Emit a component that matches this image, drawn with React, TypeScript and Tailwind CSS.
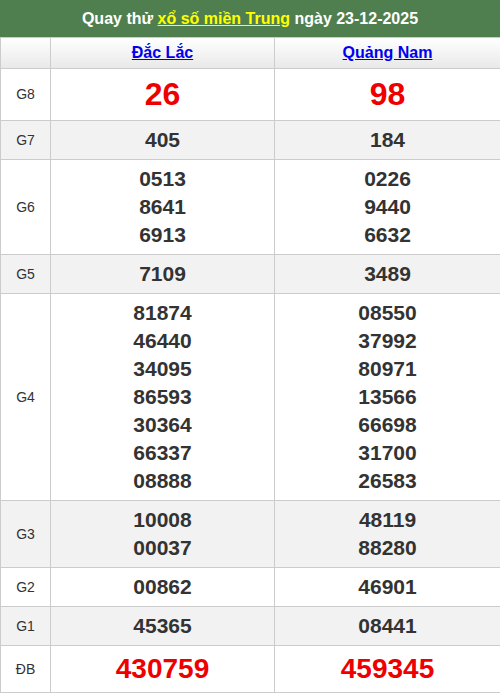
import React from "react";

const rows = [
  { label: "G8", a: ["26"], b: ["98"], big: "g8" },
  { label: "G7", a: ["405"], b: ["184"] },
  { label: "G6", a: ["0513", "8641", "6913"], b: ["0226", "9440", "6632"] },
  { label: "G5", a: ["7109"], b: ["3489"] },
  {
    label: "G4",
    a: ["81874", "46440", "34095", "86593", "30364", "66337", "08888"],
    b: ["08550", "37992", "80971", "13566", "66698", "31700", "26583"],
  },
  { label: "G3", a: ["10008", "00037"], b: ["48119", "88280"] },
  { label: "G2", a: ["00862"], b: ["46901"] },
  { label: "G1", a: ["45365"], b: ["08441"] },
  { label: "ĐB", a: ["430759"], b: ["459345"], big: "db" },
];

function Cell({ nums, big }: { nums: string[]; big?: string }) {
  let cls = "text-[21px] leading-[28px] text-[#333]";
  if (big === "g8") cls = "text-[32px] leading-[41px] text-[#e00]";
  if (big === "db") cls = "text-[28px] leading-[36px] text-[#e00]";
  return (
    <td className="border border-[#ccc] py-[5px] text-center font-bold">
      {nums.map((n) => (
        <div key={n} className={cls}>
          {n}
        </div>
      ))}
    </td>
  );
}

export default function App() {
  return (
    <div className="w-[500px] bg-white" style={{ fontFamily: "'Liberation Sans', Arial, sans-serif" }}>
      <div className="h-[37px] bg-[#4f7f4f] flex items-center justify-center text-white font-bold text-[16px]">
        Quay thử&nbsp;
        <a href="#" className="text-[#ffff00] underline">
          xổ số miền Trung
        </a>
        &nbsp;ngày 23-12-2025
      </div>
      <table className="w-[500px] border-collapse table-fixed">
        <colgroup>
          <col className="w-[50px]" />
          <col className="w-[224px]" />
          <col className="w-[226px]" />
        </colgroup>
        <thead>
          <tr className="h-[31px] bg-gradient-to-b from-white to-[#e8e8e8]">
            <th className="border border-[#ccc]"></th>
            <th className="border border-[#ccc] text-[16px] font-bold">
              <a href="#" className="text-[#0000ee] underline">Đắc Lắc</a>
            </th>
            <th className="border border-[#ccc] text-[16px] font-bold">
              <a href="#" className="text-[#0000ee] underline">Quảng Nam</a>
            </th>
          </tr>
        </thead>
        <tbody>
          {rows.map((r, i) => (
            <tr key={r.label} className={i % 2 === 1 ? "bg-[#f2f2f2]" : "bg-white"}>
              <td className="border border-[#ccc] text-center text-[14px] text-[#333]">{r.label}</td>
              <Cell nums={r.a} big={r.big} />
              <Cell nums={r.b} big={r.big} />
            </tr>
          ))}
        </tbody>
      </table>
    </div>
  );
}
